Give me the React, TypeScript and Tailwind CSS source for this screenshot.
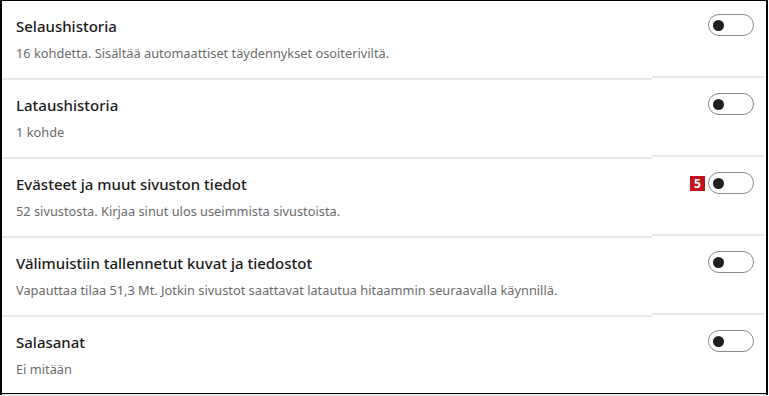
const rows = [
  { title: "Selaushistoria", desc: "16 kohdetta. Sisältää automaattiset täydennykset osoiteriviltä." },
  { title: "Lataushistoria", desc: "1 kohde" },
  { title: "Evästeet ja muut sivuston tiedot", desc: "52 sivustosta. Kirjaa sinut ulos useimmista sivustoista.", badge: "5" },
  { title: "Välimuistiin tallennetut kuvat ja tiedostot", desc: "Vapauttaa tilaa 51,3 Mt. Jotkin sivustot saattavat latautua hitaammin seuraavalla käynnillä." },
  { title: "Salasanat", desc: "Ei mitään" },
];

function Toggle() {
  return (
    <div className="w-[46px] h-[22px] rounded-full border border-[#8a8a8a] bg-white flex items-center pl-[4px]">
      <div className="w-[11px] h-[11px] rounded-full bg-[#1f1f1f]" />
    </div>
  );
}

export default function App() {
  return (
    <div className="w-[769px] h-[396px] bg-white" style={{ fontFamily: '"Noto Sans", "Open Sans", sans-serif' }}>
      <div className="w-[768px] h-[395px] border-t border-l-2 border-r-2 border-b-2 border-black flex flex-col">
        {rows.map((r, i) => (
          <div key={i} className="flex flex-col">
            <div className="h-[77px] flex items-start justify-between pl-[14px] pr-[12px]">
              <div className="pt-[15px]">
                <div className="text-[15px] leading-[20px] font-medium text-[#1b1b1b]">{r.title}</div>
                <div className="mt-[8px] text-[12.8px] leading-[18px] text-[#6b6b6b]">{r.desc}</div>
              </div>
              <div className="pt-[13px] flex items-center gap-[3px]">
                {r.badge && (
                  <div className="w-[15px] h-[15px] bg-[#c4111b] text-white text-[12px] leading-[15px] font-bold flex items-center justify-center">
                    {r.badge}
                  </div>
                )}
                <Toggle />
              </div>
            </div>
            {i < rows.length - 1 ? (
              <div className="flex items-start h-[2px]">
                <div className="w-[650px] h-[2px] bg-[#e8e8e8]" />
                <div className="w-[112px] h-[2px] bg-[#e8e8e8] -mt-[2px]" />
              </div>
            ) : (
              <div className="h-[2px] bg-[#e8e8e8]" />
            )}
          </div>
        ))}
      </div>
    </div>
  );
}
